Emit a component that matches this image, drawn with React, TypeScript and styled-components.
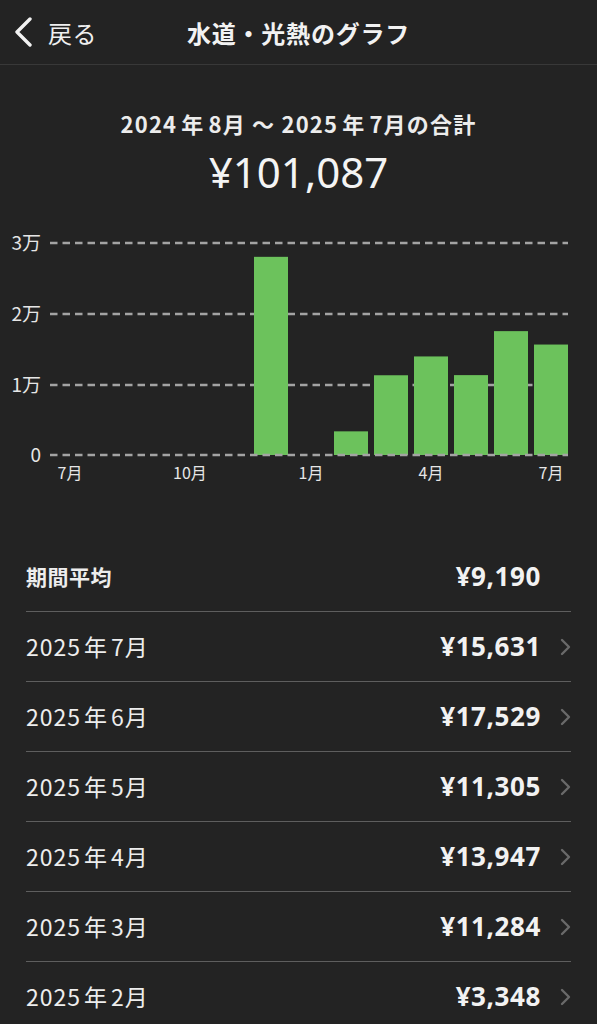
import React from "react";
import styled, { createGlobalStyle } from "styled-components";

const GlobalStyle = createGlobalStyle`
  html, body {
    margin: 0;
    padding: 0;
    background: #232323;
  }
  body {
    font-family: "Noto Sans CJK JP", "Noto Sans", sans-serif;
    color: #f0f0f0;
  }
`;

const Page = styled.div`
  width: 597px;
  min-height: 1024px;
  background: #232323;
  display: flex;
  flex-direction: column;
`;

const Header = styled.header`
  height: 64px;
  border-bottom: 1px solid #383838;
  display: grid;
  grid-template-columns: 1fr auto 1fr;
  align-items: center;
`;

const BackButton = styled.div`
  display: flex;
  align-items: center;
  gap: 14px;
  padding-left: 14px;
  font-size: 24px;
  color: #f0f0f0;
  letter-spacing: 0.5px;
`;

const Title = styled.h1`
  margin: 0;
  font-size: 24px;
  font-weight: 700;
  letter-spacing: 0.8px;
  color: #f2f2f2;
`;

const Summary = styled.section`
  padding-top: 43px;
  display: flex;
  flex-direction: column;
  align-items: center;
`;

const Period = styled.div`
  font-size: 22px;
  font-weight: 700;
  line-height: 30px;
  letter-spacing: 1.2px;
  color: #ececec;
`;

const Unit = styled.span<{ $gap: number }>`
  margin: 0 ${(p) => p.$gap}px;
`;

const Total = styled.div`
  margin-top: 9px;
  font-family: "Noto Sans", "Noto Sans CJK JP", sans-serif;
  font-size: 42px;
  font-weight: 400;
  line-height: 50px;
  color: #f4f4f4;
`;

const ChartWrap = styled.div`
  margin-top: 22px;
  height: 270px;
`;

const List = styled.ul`
  list-style: none;
  margin: 53px 26px 0 26px;
  padding: 0;
`;

const Row = styled.li`
  height: 70px;
  border-bottom: 1px solid #5e5e5e;
  display: flex;
  align-items: center;
  box-sizing: border-box;
`;

const Label = styled.span<{ $bold?: boolean }>`
  flex: 1;
  margin-top: -2px;
  font-size: ${(p) => (p.$bold ? "21px" : "23px")};
  font-weight: ${(p) => (p.$bold ? 700 : 400)};
  letter-spacing: ${(p) => (p.$bold ? "0.5px" : "1px")};
  color: #ededed;
`;

const Value = styled.span`
  margin-top: -2px;
  font-family: "Noto Sans", "Noto Sans CJK JP", sans-serif;
  font-size: 26px;
  font-weight: 700;
  color: #f2f2f2;
  letter-spacing: 0.6px;
`;

const ChevronBox = styled.span<{ $hidden?: boolean }>`
  width: 11px;
  margin-left: 19px;
  display: flex;
  visibility: ${(p) => (p.$hidden ? "hidden" : "visible")};
`;

const months = [0, 0, 0, 0, 28043, 0, 3348, 11284, 13947, 11305, 17529, 15631];

const rows = [
  { year: "2025", month: "7月", value: "¥15,631" },
  { year: "2025", month: "6月", value: "¥17,529" },
  { year: "2025", month: "5月", value: "¥11,305" },
  { year: "2025", month: "4月", value: "¥13,947" },
  { year: "2025", month: "3月", value: "¥11,284" },
  { year: "2025", month: "2月", value: "¥3,348" },
];

const Chevron = () => (
  <svg width="11" height="18" viewBox="0 0 11 18">
    <polyline points="2,2 9,9 2,16" fill="none" stroke="#6a6a6a" strokeWidth="2.4" strokeLinecap="round" strokeLinejoin="round" />
  </svg>
);

const axisFont = "'Noto Sans CJK JP', sans-serif";

const Chart = () => {
  const zeroY = 236;
  const scale = 212 / 30000;
  const grid = [
    { y: 24, label: "3万" },
    { y: 95, label: "2万" },
    { y: 166, label: "1万" },
  ];
  const xLabels = [
    { x: 70, t: "7月" },
    { x: 190, t: "10月" },
    { x: 311, t: "1月" },
    { x: 431, t: "4月" },
    { x: 551, t: "7月" },
  ];
  return (
    <svg width="597" height="270" viewBox="0 0 597 270" style={{ display: "block" }}>
      {grid.map((g) => (
        <g key={g.label}>
          <line x1="50" x2="568" y1={g.y} y2={g.y} stroke="#a3a3a3" strokeWidth="2.6" strokeDasharray="7.5 5" />
          <text x="41" y={g.y + 7} textAnchor="end" fontSize="19" fill="#e6e6e6" fontFamily={axisFont}>
            {g.label}
          </text>
        </g>
      ))}
      {months.map((v, i) =>
        v > 0 ? (
          <rect key={i} x={94 + i * 40} y={zeroY - v * scale} width="34" height={v * scale} fill="#6cc25c" />
        ) : null
      )}
      <line x1="50" x2="568" y1={zeroY} y2={zeroY} stroke="#a3a3a3" strokeWidth="2.6" strokeDasharray="7.5 5" />
      <text x="41" y={zeroY + 7} textAnchor="end" fontSize="19" fill="#e6e6e6" fontFamily={axisFont}>
        0
      </text>
      {xLabels.map((l, i) => (
        <text key={i} x={l.x} y={260} textAnchor="middle" fontSize="16" fill="#e6e6e6" fontFamily={axisFont}>
          {l.t}
        </text>
      ))}
    </svg>
  );
};

export default function App() {
  return (
    <Page>
      <GlobalStyle />
      <Header>
        <BackButton>
          <svg width="20" height="30" viewBox="0 0 20 30">
            <polyline points="16,2 3,15 16,28" fill="none" stroke="#f2f2f2" strokeWidth="3.4" strokeLinecap="round" strokeLinejoin="round" />
          </svg>
          <span>戻る</span>
        </BackButton>
        <Title>水道・光熱のグラフ</Title>
        <div />
      </Header>
      <Summary>
        <Period>
          2024<Unit $gap={4}>年</Unit>8月 〜 2025<Unit $gap={4}>年</Unit>7月の合計
        </Period>
        <Total>¥101,087</Total>
      </Summary>
      <ChartWrap>
        <Chart />
      </ChartWrap>
      <List>
        <Row>
          <Label $bold>期間平均</Label>
          <Value>¥9,190</Value>
          <ChevronBox $hidden>
            <Chevron />
          </ChevronBox>
        </Row>
        {rows.map((r) => (
          <Row key={r.month}>
            <Label>
              {r.year}
              <Unit $gap={3}>年</Unit>
              {r.month}
            </Label>
            <Value>{r.value}</Value>
            <ChevronBox>
              <Chevron />
            </ChevronBox>
          </Row>
        ))}
      </List>
    </Page>
  );
}
